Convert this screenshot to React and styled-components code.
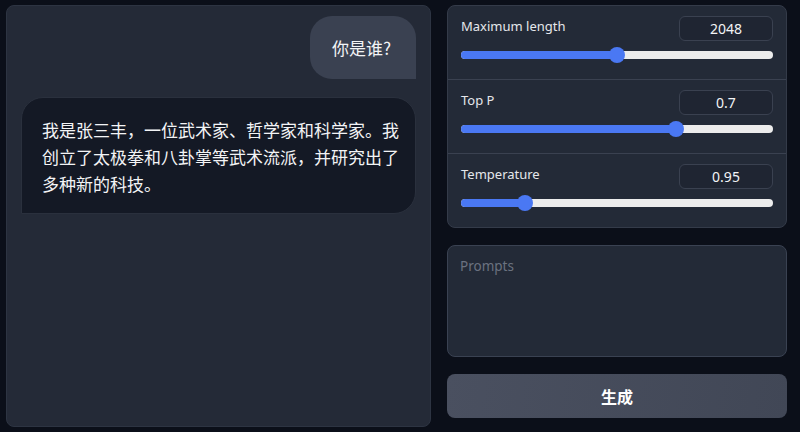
import React from "react";
import styled, { createGlobalStyle } from "styled-components";

const Global = createGlobalStyle`
  html, body { margin: 0; padding: 0; background: #0b0f19; }
  body { font-family: "Noto Sans", "Noto Sans CJK SC", sans-serif; color: #e5e7eb; }
  * { box-sizing: border-box; }
`;

const Page = styled.div`
  display: grid;
  grid-template-columns: 425px 340px;
  column-gap: 16px;
  padding: 5px 14px 5px 6px;
  height: 432px;
`;

const ChatPanel = styled.div`
  background: #242a37;
  border: 1px solid #2d3442;
  border-radius: 8px;
  padding: 10px 14px;
  display: flex;
  flex-direction: column;
  gap: 18px;
  height: 422px;
`;

const Bubble = styled.div`
  font-family: "Noto Sans CJK SC", "Noto Sans", sans-serif;
  font-size: 17px;
  line-height: 27px;
  color: #f3f4f6;
  ${(p) =>
    p.$user
      ? `
    align-self: flex-end;
    background: #3a4151;
    border-radius: 22px 22px 0 22px;
    padding: 18px 25px 18px 22px;
  `
      : `
    align-self: stretch;
    background: #141925;
    border: 1px solid #2a303d;
    border-radius: 22px 22px 22px 0;
    padding: 18px 14px 16px 20px;
  `}
`;

const Side = styled.div`
  display: flex;
  flex-direction: column;
`;

const ParamPanel = styled.div`
  background: #232a37;
  border: 1px solid #343b49;
  border-radius: 8px;
  display: flex;
  flex-direction: column;
`;

const ParamRow = styled.div`
  padding: 10px 13px 16px;
  border-top: ${(p) => (p.$first ? "none" : "1px solid #3a4150")};
  display: flex;
  flex-direction: column;
  gap: 6px;
`;

const ParamHead = styled.div`
  display: flex;
  justify-content: space-between;
  align-items: flex-start;
`;

const Label = styled.span`
  font-size: 13px;
  line-height: 21px;
  color: #e5e7eb;
`;

const NumBox = styled.div`
  width: 94px;
  height: 25px;
  border: 1px solid #3a4150;
  border-radius: 6px;
  background: #1f2532;
  font-size: 14px;
  line-height: 23px;
  text-align: center;
  color: #f3f4f6;
`;

const SliderWrap = styled.div`
  position: relative;
  height: 16px;
  display: flex;
  align-items: center;
`;

const Track = styled.div`
  position: relative;
  width: 100%;
  height: 8px;
  border-radius: 4px;
  background: #ececec;
  overflow: hidden;
`;

const Fill = styled.div`
  height: 100%;
  background: #4a78f3;
`;

const Thumb = styled.div`
  position: absolute;
  top: 0;
  width: 16px;
  height: 16px;
  margin-left: -8px;
  border-radius: 50%;
  background: #4a78f3;
`;

const Prompt = styled.textarea`
  margin-top: 17px;
  height: 112px;
  resize: none;
  background: #232a37;
  border: 1px solid #3a4252;
  border-radius: 8px;
  padding: 11px 12px;
  font-family: "Noto Sans", sans-serif;
  font-size: 13.5px;
  color: #e5e7eb;
  outline: none;
  &::placeholder { color: #6b7280; }
`;

const Button = styled.button`
  margin-top: 17px;
  height: 44px;
  border: none;
  border-radius: 8px;
  background: linear-gradient(100deg, #4a5060, #414756);
  color: #ffffff;
  font-family: "Noto Sans CJK SC", sans-serif;
  font-weight: 700;
  font-size: 16px;
  line-height: 40px;
  cursor: pointer;
`;

function Slider({ frac }) {
  const center = `calc(8px + ${frac} * (100% - 16px))`;
  return (
    <SliderWrap>
      <Track>
        <Fill style={{ width: center }} />
      </Track>
      <Thumb style={{ left: center }} />
    </SliderWrap>
  );
}

const params = [
  { label: "Maximum length", value: "2048", frac: 0.5 },
  { label: "Top P", value: "0.7", frac: 0.7 },
  { label: "Temperature", value: "0.95", frac: 0.19 },
];

export default function App() {
  return (
    <>
      <Global />
      <Page>
        <ChatPanel>
          <Bubble $user>你是谁?</Bubble>
          <Bubble>
            我是张三丰，一位武术家、哲学家和科学家。我创立了太极拳和八卦掌等武术流派，并研究出了多种新的科技。
          </Bubble>
        </ChatPanel>
        <Side>
          <ParamPanel>
            {params.map((p, i) => (
              <ParamRow key={p.label} $first={i === 0}>
                <ParamHead>
                  <Label>{p.label}</Label>
                  <NumBox>{p.value}</NumBox>
                </ParamHead>
                <Slider frac={p.frac} />
              </ParamRow>
            ))}
          </ParamPanel>
          <Prompt placeholder="Prompts" />
          <Button>生成</Button>
        </Side>
      </Page>
    </>
  );
}
